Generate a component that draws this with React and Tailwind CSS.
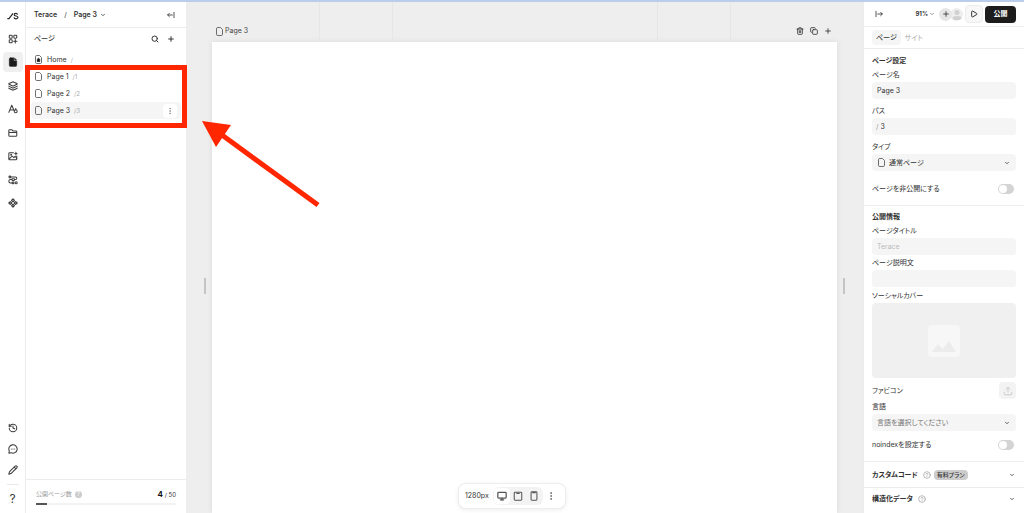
import React from "react";
import {
  Search, Plus, ChevronDown, Layers, Folder, History, MessageCircleMore, Pencil,
  Trash2, Copy, Play, Upload, EllipsisVertical, CircleHelp, Monitor,
} from "lucide-react";

function Svg({ className = "size-2.5", width = 2.5, children }) {
  return (
    <svg viewBox="0 0 24 24" fill="none" stroke="currentColor" strokeWidth={width} strokeLinecap="round" strokeLinejoin="round" className={className} aria-hidden="true">
      {children}
    </svg>
  );
}

function PageIcon({ home = false }) {
  return (
    <svg viewBox="0 0 14 18" fill="none" stroke="currentColor" strokeWidth="1.7" strokeLinejoin="round" className="h-[9px] w-[7px] text-[#555]" aria-hidden="true">
      <path d="M4 1h5l4 4v9.500a2.500 2.500 0 0 1-2.500 2.500h-7A2.500 2.500 0 0 1 1 14.500v-11A2.500 2.500 0 0 1 3.500 1z" />
      {home && <path d="M4.500 8.500 7 6.500l2.500 2v4.500h-5z" fill="#222" stroke="#222" />}
    </svg>
  );
}

function Logo() {
  return (
    <svg viewBox="0 0 36 24" fill="none" stroke="currentColor" strokeWidth="3.4" className="h-2 w-3" aria-hidden="true">
      <path d="M1 20h5L18 4" />
      <path d="M32 7.500C31 5 29 4 26.500 4 23.500 4 21.500 5.500 21.500 8c0 5.500 11.500 2.500 11.500 8 0 2.600-2.500 4.500-6 4.500-3.300 0-5.500-1.500-6-4.500" />
    </svg>
  );
}

function CollapseIcon({ flip = false }) {
  return (
    <Svg className="size-2">
      {flip ? <path d="M3 4v16M8 12h14M17 7l5 5-5 5" /> : <path d="M21 4v16M16 12H2M7 7l-5 5 5 5" />}
    </Svg>
  );
}

const railTop = [
  {
    name: "Add", icon: (
      <Svg>
        <rect x="3" y="3" width="7" height="7" rx="1.500" /><rect x="14" y="3" width="7" height="7" rx="1.500" />
        <rect x="3" y="14" width="7" height="7" rx="1.500" /><path d="M17.500 13.500v8M13.500 17.500h8" />
      </Svg>
    ),
  },
  {
    name: "Pages", active: true, icon: (
      <Svg width={1}>
        <path d="M6 2h8v7h7v10.500a3 3 0 0 1-3 3H6a3 3 0 0 1-3-3V5a3 3 0 0 1 3-3z" fill="currentColor" />
        <path d="M16 2.500 20.500 7H16z" fill="currentColor" />
      </Svg>
    ),
  },
  { name: "Layers", icon: <Layers className="size-2.5" strokeWidth={2.5} /> },
  {
    name: "Fonts", icon: (
      <Svg><path d="M2 20 9 3l5.500 12.500M4.500 14.500h7" /><circle cx="18.500" cy="17.500" r="3.500" /><path d="M18.500 11v3" /></Svg>
    ),
  },
  {
    name: "Files", icon: (
      <Svg><path d="M2 6a2 2 0 0 1 2-2h5l3 3h7a2 2 0 0 1 2 2v9a2 2 0 0 1-2 2H4a2 2 0 0 1-2-2zM2 11h19" /></Svg>
    ),
  },
  {
    name: "Images", icon: (
      <Svg>
        <path d="M13 4H4a2 2 0 0 0-2 2v13a2 2 0 0 0 2 2h15a2 2 0 0 0 2-2v-7" />
        <path d="m3 19 7-7 4 4 3-3 4 4" /><circle cx="7.500" cy="9" r="1" />
        <path d="M19 .5 20.500 4.500 24 6l-3.500 1.500L19 11.500l-1.500-4L14 6l3.500-1.500z" fill="currentColor" stroke="none" />
      </Svg>
    ),
  },
  {
    name: "Interactions", icon: (
      <Svg>
        <circle cx="4.500" cy="5" r="2.300" /><path d="M7 5h11a3 3 0 0 1 0 6" /><rect x="9" y="9" width="7" height="4" rx="2" />
        <path d="M9 11H6a4 4 0 0 0 0 8h4" /><rect x="10" y="17" width="4" height="4" rx="1" /><circle cx="19.500" cy="18.500" r="2.500" />
      </Svg>
    ),
  },
  {
    name: "Components", icon: (
      <Svg width={2.800}>
        <path d="m12 2 3.500 3.500L12 9 8.500 5.500zM12 15l3.500 3.500L12 22l-3.500-3.500zM5.500 8.500 9 12l-3.500 3.500L2 12zM18.500 8.500 22 12l-3.500 3.500L15 12z" />
      </Svg>
    ),
  },
];

const railBottom = [
  { name: "History", icon: <History className="size-2.5" strokeWidth={2.5} /> },
  { name: "Comments", icon: <MessageCircleMore className="size-2.5" strokeWidth={2.5} /> },
  { name: "Edit", icon: <Pencil className="size-2.5" strokeWidth={2.5} /> },
];

const pages = [
  { name: "Home", path: "/", home: true },
  { name: "Page 1", path: "/1" },
  { name: "Page 2", path: "/2" },
  { name: "Page 3", path: "/3", active: true },
];

function RailButton({ name, icon, active }) {
  return (
    <button type="button" aria-label={name} className={`flex size-5 items-center justify-center rounded ${active ? "bg-[#efefef] text-[#1c1c1c]" : ""}`}>
      {icon}
    </button>
  );
}

function Rail() {
  return (
    <nav className="flex w-[26px] shrink-0 flex-col items-center border-r border-[#ececec] text-[#3c3c3c]">
      <a href="#home" aria-label="Studio" className="flex h-[27px] items-center text-[#222]"><Logo /></a>
      <div className="flex h-[184px] flex-col justify-between">
        {railTop.map((r) => <RailButton key={r.name} {...r} />)}
      </div>
      <div className="mt-auto flex flex-col gap-px">
        {railBottom.map((r) => <RailButton key={r.name} {...r} />)}
      </div>
      <div className="mt-1 h-px w-3 bg-[#e8e8e8]" />
      <button type="button" className="mt-1 mb-1 h-5 w-5 text-xs leading-5">?</button>
    </nav>
  );
}

function LeftPanel() {
  return (
    <aside className="flex w-[160px] shrink-0 flex-col">
      <header className="flex h-[26px] items-center border-b border-[#ececec] pr-[11px] pl-2 font-semibold">
        <a href="#project">Terace</a>
        <span className="mx-[7px] font-normal">/</span>
        <button type="button" className="flex items-center gap-[3px]">Page 3<ChevronDown className="size-1.5" strokeWidth={3} /></button>
        <button type="button" aria-label="Collapse" className="ml-auto"><CollapseIcon /></button>
      </header>
      <div className="flex h-[21px] items-center gap-2 pr-[11px] pl-2">
        <h2 className="mr-auto font-medium">ページ</h2>
        <button type="button" aria-label="Search"><Search className="size-2" strokeWidth={3} /></button>
        <button type="button" aria-label="Add page"><Plus className="size-2" strokeWidth={3} /></button>
      </div>
      <div className="relative mt-[2px]">
        <ul className="px-[5px]">
          {pages.map((p) => (
            <li key={p.name} className={`flex h-[17px] items-center rounded-sm pl-1 ${p.active ? "bg-[#f5f5f5]" : ""}`}>
              <PageIcon home={p.home} />
              <a href={`#${p.name}`} className="ml-[5px]">{p.name}</a>
              <span className="ml-1 text-[6px] text-[#aaa]">{p.path}</span>
              {p.active && (
                <button type="button" aria-label="Page menu" className="mr-1 ml-auto flex size-3.5 items-center justify-center rounded-sm bg-white text-[#777]">
                  <EllipsisVertical className="size-2" />
                </button>
              )}
            </li>
          ))}
        </ul>
        <div className="pointer-events-none absolute -inset-x-px top-3.5 z-10 h-[63px] border-[5px] border-[#ff2600]" />
      </div>
      <footer className="mt-auto h-[34px] border-t border-[#ececec] px-2.5 pt-2.5">
        <div className="flex h-2 items-center text-[6px]">
          <span className="text-[#999]">公開ページ数</span>
          <span className="ml-[3px] flex size-[7px] items-center justify-center rounded-full bg-[#ccc] text-[6px] text-white">?</span>
          <span className="ml-auto"><b className="text-[8px] text-[#111]">4</b> / 50</span>
        </div>
        <div className="mt-[5px] h-0.5 bg-[#f3f3f3]"><div className="h-full w-[8%] bg-[#555]" /></div>
      </footer>
    </aside>
  );
}

function Canvas() {
  return (
    <main className="relative flex min-w-0 flex-1 flex-col bg-[#eee]">
      <div className="absolute inset-x-0 top-0 h-10">
        <div className="absolute inset-y-0 left-[19.6%] w-px bg-[#e6e6e6]" />
        <div className="absolute inset-y-0 left-[30.5%] w-px bg-[#e6e6e6]" />
        <div className="absolute inset-y-0 left-[69.5%] w-px bg-[#e6e6e6]" />
        <div className="absolute inset-y-0 left-[80.3%] w-px bg-[#e6e6e6]" />
      </div>
      <div className="relative flex h-10 items-center pt-[19px] pr-[30px] pb-px pl-[30px]">
        <div className="flex items-center gap-0.5 text-[#444]"><PageIcon /><span>Page 3</span></div>
        <div className="ml-auto flex items-center gap-1">
          <button type="button" aria-label="Delete" className="p-px"><Trash2 className="size-2" strokeWidth={2.5} /></button>
          <button type="button" aria-label="Duplicate" className="p-px"><Copy className="size-2" strokeWidth={2.5} /></button>
          <button type="button" aria-label="Add" className="p-px"><Plus className="size-2" strokeWidth={2.5} /></button>
        </div>
      </div>
      <div className="flex flex-1">
        <div className="flex w-[26px] items-center justify-end pt-4 pr-1.5"><div className="h-4 w-0.5 bg-[#c4c4c4]" /></div>
        <div className="flex-1 bg-white shadow-[0_0_6px_#00000014]" />
        <div className="flex w-[26px] items-center pt-4 pl-1.5"><div className="h-4 w-0.5 bg-[#c4c4c4]" /></div>
      </div>
      <svg viewBox="0 0 120 90" className="absolute top-[117px] left-3.5 h-[90px] w-[120px]" aria-hidden="true">
        <path d="M2 2 31 6 16 28z" fill="#ff2600" />
        <path d="M22 16 118 86" stroke="#ff2600" strokeWidth="5" />
      </svg>
    </main>
  );
}

function Toolbar() {
  return (
    <div className="absolute bottom-1 left-1/2 flex h-[26px] w-[108px] -translate-x-1/2 items-center rounded-lg border border-[#eee] bg-white pr-[9px] pl-1.5 shadow-[0_1px_4px_#00000014]">
      <span>1280px</span>
      <div className="ml-1 flex rounded-md bg-[#f3f3f3] p-px text-[#555]">
        <button type="button" aria-label="Desktop" className="flex size-4 items-center justify-center rounded bg-white"><Monitor className="size-2.5" strokeWidth={3} /></button>
        <button type="button" aria-label="Tablet" className="flex size-4 items-center justify-center">
          <Svg><rect x="3" y="3" width="18" height="19" rx="2" /><path d="M9 6h6" /></Svg>
        </button>
        <button type="button" aria-label="Phone" className="flex size-4 items-center justify-center">
          <Svg><rect x="5" y="2" width="14" height="20" rx="2" /><path d="M9 4h6" strokeWidth="3" /></Svg>
        </button>
      </div>
      <button type="button" aria-label="More" className="ml-auto text-[#555]"><EllipsisVertical className="size-2.5" /></button>
    </div>
  );
}

function Field({ id, label, children, className = "" }) {
  return (
    <div className={className}>
      <label htmlFor={id} className="flex h-3.5 items-center">{label}</label>
      {children}
    </div>
  );
}

function Toggle({ id, label, className = "" }) {
  return (
    <div className={`flex h-2.5 items-center justify-between pr-0.5 ${className}`}>
      <label htmlFor={id}>{label}</label>
      <input id={id} type="checkbox" role="switch" className="h-2.5 w-4 appearance-none rounded-full bg-[#d4d4d4] p-px before:block before:size-2 before:rounded-full before:bg-white checked:bg-[#555] checked:before:translate-x-1.5" />
    </div>
  );
}

function SelectBox({ id, text, icon }) {
  return (
    <div className="relative">
      <select id={id} className={`block h-[17px] w-full appearance-none rounded bg-[#f5f5f5] pr-4 ${icon ? "pl-[17px]" : "pl-[5px] text-[#777]"}`}>
        <option>{text}</option>
      </select>
      {icon && <span className="pointer-events-none absolute inset-y-0 left-1.5 flex items-center"><PageIcon /></span>}
      <span className="pointer-events-none absolute inset-y-0 right-1.5 flex items-center"><ChevronDown className="size-1.5" strokeWidth={3} /></span>
    </div>
  );
}

function RightPanel() {
  const box = "block h-[17px] w-full rounded bg-[#f5f5f5] px-[5px] placeholder:text-[#bbb]";
  return (
    <aside className="flex w-[161px] shrink-0 flex-col overflow-hidden border-l border-[#ececec]">
      <header className="flex h-[25px] shrink-0 items-center border-b border-[#ececec] pr-2 pl-[11px]">
        <button type="button" aria-label="Collapse"><CollapseIcon flip /></button>
        <button type="button" className="ml-auto flex items-center gap-px text-[6px] font-bold">91%<ChevronDown className="size-1.5" /></button>
        <button type="button" aria-label="Invite" className="z-10 ml-1 flex size-[13px] items-center justify-center rounded-full bg-[#e6e6e6]"><Plus className="size-2" strokeWidth={2.5} /></button>
        <span className="-ml-0.5 flex size-[13px] items-center justify-center overflow-hidden rounded-full bg-[#eee]">
          <svg viewBox="0 0 24 24" fill="#d0d0d0" className="size-3" aria-hidden="true"><circle cx="12" cy="9" r="5" /><ellipse cx="12" cy="20" rx="9" ry="4" /></svg>
        </span>
        <button type="button" aria-label="Preview" className="ml-0.5 flex size-[18px] items-center justify-center rounded border border-[#ededed] bg-[#f7f7f7]"><Play className="size-2" strokeWidth={3} /></button>
        <button type="button" className="ml-0.5 h-[17px] w-[31px] rounded bg-[#1c1c1c] font-semibold text-white">公開</button>
      </header>
      <div role="tablist" className="flex h-[22px] shrink-0 items-center gap-1 border-b border-[#ececec] px-2">
        <button type="button" role="tab" aria-selected="true" className="h-[15px] rounded-sm bg-[#f5f5f5] px-1 font-medium">ページ</button>
        <button type="button" role="tab" aria-selected="false" className="text-[#aaa]">サイト</button>
      </div>
      <section className="border-b border-[#ececec] px-2 pt-1 pb-[11px]">
        <h2 className="flex h-[15px] items-center font-bold">ページ設定</h2>
        <Field id="name" label="ページ名"><input id="name" defaultValue="Page 3" className={box} /></Field>
        <Field id="path" label="パス" className="mt-[5px]">
          <div className="flex h-[17px] items-center rounded bg-[#f5f5f5] px-1">
            <span className="text-[#999]">/</span>
            <input id="path" defaultValue="3" className="ml-0.5 w-full min-w-0 bg-transparent" />
          </div>
        </Field>
        <Field id="type" label="タイプ" className="mt-[5px]"><SelectBox id="type" text="通常ページ" icon /></Field>
        <Toggle id="private" label="ページを非公開にする" className="mt-[13px]" />
      </section>
      <section className="border-b border-[#ececec] px-2 pt-[3px] pb-[11px]">
        <h2 className="flex h-[15px] items-center font-bold">公開情報</h2>
        <Field id="title" label="ページタイトル"><input id="title" placeholder="Terace" className={box} /></Field>
        <Field id="description" label="ページ説明文" className="mt-px"><input id="description" className={box} /></Field>
        <Field id="cover" label="ソーシャルカバー" className="mt-[2px]">
          <button id="cover" type="button" aria-label="ソーシャルカバー" className="flex h-[75px] w-full items-center justify-center rounded bg-[#f0f0f0]">
            <span className="flex size-8 items-center justify-center rounded bg-[#f7f7f7]">
              <svg viewBox="0 0 32 32" fill="#ececec" className="size-8" aria-hidden="true"><path d="M4 27 10 19l5 5 6-8 7 11z" /></svg>
            </span>
          </button>
        </Field>
        <div className="mt-1 flex h-[17px] items-center justify-between">
          <span>ファビコン</span>
          <button type="button" aria-label="ファビコン" className="flex size-[17px] items-center justify-center rounded-sm bg-[#f3f3f3] text-[#c4c4c4]"><Upload className="size-2.5" /></button>
        </div>
        <Field id="language" label="言語" className="mt-px"><SelectBox id="language" text="言語を選択してください" /></Field>
        <Toggle id="noindex" label="noindexを設定する" className="mt-[9px]" />
      </section>
      <button type="button" className="flex h-[26px] shrink-0 items-center border-b border-[#ececec] px-2">
        <span className="font-bold">カスタムコード</span>
        <CircleHelp className="ml-[5px] size-2 text-[#999]" />
        <span className="ml-[3px] flex h-2.5 items-center rounded-sm bg-[#ccc] px-[3px] text-[6px] font-medium">有料プラン</span>
        <ChevronDown className="mr-px ml-auto size-1.5" strokeWidth={3} />
      </button>
      <button type="button" className="flex h-[22px] shrink-0 items-center px-2">
        <span className="font-bold">構造化データ</span>
        <CircleHelp className="ml-[5px] size-2 text-[#999]" />
        <ChevronDown className="mr-px ml-auto size-1.5" strokeWidth={3} />
      </button>
    </aside>
  );
}

export default function App() {
  return (
    <div className="relative flex h-screen flex-col overflow-hidden bg-white font-['Inter','Noto_Sans_CJK_JP',sans-serif] text-[7px] leading-[10px] text-[#333] [font-feature-settings:'palt']">
      <div className="h-0.5 shrink-0 bg-[#bccdeb]" />
      <div className="flex min-h-0 flex-1">
        <Rail />
        <LeftPanel />
        <Canvas />
        <RightPanel />
      </div>
      <Toolbar />
    </div>
  );
}
